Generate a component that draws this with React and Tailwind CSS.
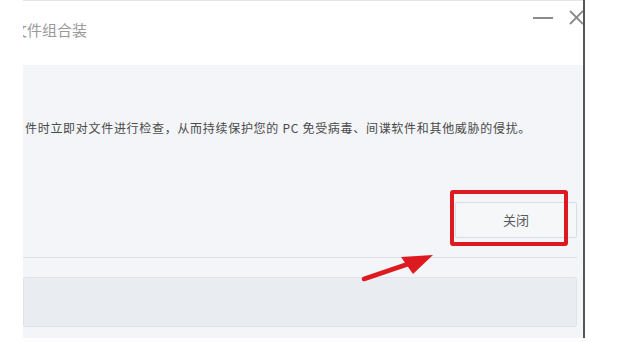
import React from 'react'

const cjk = { fontFamily: '"Noto Sans CJK SC", "Noto Sans", sans-serif' }

function TitleBar() {
  return (
    <div className="relative h-[65px] shrink-0 bg-white border-t border-[#e3e5e8]">
      <div
        className="absolute left-[-11px] top-[19px] text-[15px] leading-[20px] text-[#9a9a9a] whitespace-nowrap"
        style={cjk}
      >
        文件组合装
      </div>
      {/* window controls */}
      <div className="absolute left-[510px] top-[16px] w-[20px] h-[2px] bg-[#8a8a8a]" />
      <svg className="absolute left-[546px] top-[9px]" width="16" height="15" viewBox="0 0 16 15">
        <path d="M1 1 L14 14 M14 1 L1 14" stroke="#8a8a8a" strokeWidth="1.8" fill="none" />
      </svg>
    </div>
  )
}

function Body() {
  return (
    <div className="flex-1 flex flex-col bg-[#f3f5f8] pr-[6px]">
      <p
        className="pt-[55px] pl-[2px] text-[12px] leading-[16px] tracking-[0.7px] text-[#4a4a4a] whitespace-nowrap"
        style={cjk}
      >
        件时立即对文件进行检查，从而持续保护您的 PC 免受病毒、间谍软件和其他威胁的侵扰。
      </p>

      <div className="flex justify-end mt-[66px]">
        <button
          className="w-[122px] h-[36px] bg-[#f6f7f9] border border-[#d9dde3] rounded-[2px] text-[13px] text-[#5a5a5a]"
          style={cjk}
        >
          关闭
        </button>
      </div>

      <div className="mt-[19px] h-px bg-[#dde1e6]" />

      <div className="mt-[19px] h-[50px] bg-[#e9ecf1] border border-[#e0e4e9] rounded-[3px]" />

      <div className="h-[11px]" />
    </div>
  )
}

export default function App() {
  return (
    <div className="relative w-[620px] h-[342px] bg-white overflow-hidden flex items-start">
      <div className="w-[23px] h-full shrink-0 bg-white" />
      <div className="w-[560px] h-[338px] shrink-0 flex flex-col overflow-hidden">
        <TitleBar />
        <Body />
      </div>
      <div className="w-[2px] h-[338px] shrink-0 bg-[#555555]" />
      <div className="flex-1 h-full bg-white" />

      {/* annotation: red highlight box */}
      <div className="absolute left-[450px] top-[190px] w-[118px] h-[56px] border-[4px] border-[#dc1a1f] rounded-[3px]" />

      {/* annotation: red arrow */}
      <svg className="absolute left-0 top-0 pointer-events-none" width="620" height="342">
        <path d="M364 279 L414 262" stroke="#dc1a1f" strokeWidth="4.5" strokeLinecap="round" fill="none" />
        <polygon points="433,255 401,257 413,274" fill="#dc1a1f" />
      </svg>
    </div>
  )
}
